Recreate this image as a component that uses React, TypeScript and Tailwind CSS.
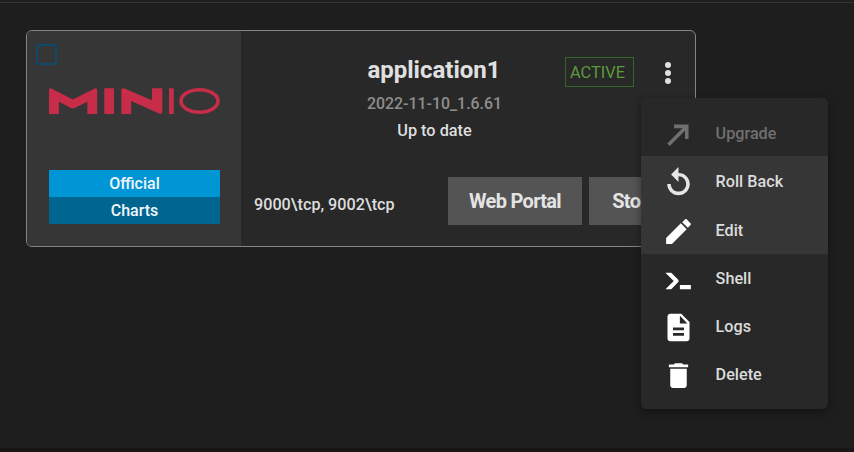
import React from "react";

const icons = {
  upgrade: "M8.8 4.8v2.6h6.1L3.8 18.5l1.8 1.8L16.7 9.2v6.1h2.6V4.8z",
  rollback:
    "M12 5V.8L6.6 6.2 12 11.6V7.4c3.1 0 5.6 2.5 5.6 5.6s-2.5 5.6-5.6 5.6-5.6-2.5-5.6-5.6H3.8c0 4.5 3.7 8.2 8.2 8.2s8.2-3.7 8.2-8.2S16.5 5 12 5z",
  edit: "M3 16.75V21h4.25L17.95 10.3l-4.25-4.25L3 16.75zM20.71 7.34c.39-.39.39-1.02 0-1.41l-2.64-2.64c-.39-.39-1.02-.39-1.41 0l-1.93 1.93 4.05 4.05 1.93-1.93z",
  shell: "M13 19V16H21V19H13M8.5 13L2.47 7H6.71L11.67 11.95C12.25 12.54 12.25 13.5 11.67 14.07L6.74 19H2.5L8.5 13Z",
  logs: "M14 2H6c-1.1 0-1.99.9-1.99 2L4 20c0 1.1.89 2 1.99 2H18c1.1 0 2-.9 2-2V8l-6-6zm2 16H8v-2h8v2zm0-4H8v-2h8v2zm-3-5V3.5L18.5 9H13z",
  trash: "M6 19c0 1.1.9 2 2 2h8c1.1 0 2-.9 2-2V7H6v12zM19 4h-3.5l-1-1h-5l-1 1H5v2h14V4z",
};

function Icon({ path, className }: { path: string; className: string }) {
  return (
    <svg viewBox="0 0 24 24" className={className} fill="currentColor">
      <path d={path} />
    </svg>
  );
}

const items = [
  { label: "Upgrade", path: icons.upgrade, row: "h-[48px] pt-[4px] text-[#707070]", icon: "text-[#707070]" },
  { label: "Roll Back", path: icons.rollback, row: "h-[49px] pt-[2px] bg-[#363636] text-[#dcdcdc]", icon: "text-[#e6e6e6]" },
  { label: "Edit", path: icons.edit, row: "h-[49px] pt-[2px] bg-[#363636] text-[#dcdcdc]", icon: "text-white" },
  { label: "Shell", path: icons.shell, row: "h-[48px] pt-[2px] text-[#dcdcdc]", icon: "text-white" },
  { label: "Logs", path: icons.logs, row: "h-[48px] pt-[2px] text-[#dcdcdc]", icon: "text-white" },
  { label: "Delete", path: icons.trash, row: "h-[48px] pt-[2px] text-[#dcdcdc]", icon: "text-white" },
];

function MinioLogo() {
  return (
    <svg viewBox="0 0 171 26" className="h-[26px] w-[171px]">
      <g fill="#c72c48">
        <path d="M0 26V2Q0-.4 2.4.4L23.8 11.4 45.6.4Q48-.4 48.2 2V26H38.3V13.7L25.6 19.9Q23.8 20.8 22 19.9L9.9 13.7V26Z" />
        <path d="M55.3.3H65V26H55.3Z" />
        <path d="M72.3 26V2Q72.5-.4 75.5.5L103 12.3V.3H113.3V24Q113 26.6 110 25.5L82.2 13V26Z" />
        <path d="M120 .3H124.8V26H120Z" />
      </g>
      <ellipse cx="150.5" cy="13" rx="18.5" ry="11.2" fill="none" stroke="#c72c48" strokeWidth="3.6" />
    </svg>
  );
}

export default function App() {
  return (
    <main className="relative h-[452px] w-[854px] overflow-hidden border-b-4 border-[#1b1518] bg-[#1e1e1e] pt-0.5 font-['Roboto',sans-serif] text-base text-[#e0e0e0]">
      <div className="h-px bg-[#343434]" />
      <article className="mt-[27px] ml-[26px] flex h-[217px] w-[670px] overflow-hidden rounded-[6px] border border-[#858585] bg-[#282828]">
        <aside className="h-full w-[214px] shrink-0 bg-[#363636] pl-[22px]">
          <div className="-ml-[13px] pt-[13px]">
            <div className="size-[21px] rounded-[2px] border-2 border-[#0e4a6b]" />
          </div>
          <div className="mt-[23px] h-[26px]">
            <MinioLogo />
          </div>
          <div className="mt-[56px] w-[171px] text-center font-medium leading-[27px] text-[#f0f6fa]">
            <div className="h-[27px] bg-[#0095d5]">Official</div>
            <div className="h-[27px] bg-[#006691]">Charts</div>
          </div>
        </aside>
        <section className="w-[454px] shrink-0">
          <div className="flex h-[146px]">
            <div className="ml-[86px] w-[214px] pt-[24px] text-center">
              <h1 className="text-2xl font-bold leading-[30px] text-[#e0e0e0]">application1</h1>
              <p className="mt-[5px] pl-px text-[15.9px] font-medium leading-[27px] text-[#8e8e8e]">2022-11-10_1.6.61</p>
              <p className="pl-px text-[16.3px] font-medium leading-[27px] text-[#dedede]">Up to date</p>
            </div>
            <div className="ml-6 mt-[26px] flex h-[30px] w-[69px] items-center justify-center border border-[#37642a] pr-[4px] pt-[2px] text-[16.4px] text-[#5d9a3e]">
              ACTIVE
            </div>
            <div className="ml-[31px] mt-[31px] flex h-[22px] flex-col justify-between">
              <i className="size-[6px] rounded-full bg-[#e0e0e0]" />
              <i className="size-[6px] rounded-full bg-[#e0e0e0]" />
              <i className="size-[6px] rounded-full bg-[#e0e0e0]" />
            </div>
          </div>
          <div className="flex h-12 items-center">
            <p className="ml-[13px] mt-[8px] w-[194px] whitespace-nowrap text-[16.2px] font-medium text-[#dedede]">9000\tcp, 9002\tcp</p>
            <button className="h-12 w-[134px] bg-[#545454] text-[20px] font-bold tracking-[-0.035em] text-[#e4e4e4]">Web Portal</button>
            <button className="ml-[7px] h-12 w-[84px] bg-[#545454] pl-px text-[20px] font-bold tracking-[-0.035em] text-[#e4e4e4]">Stop</button>
          </div>
        </section>
      </article>
      <nav className="absolute left-[641px] top-[98px] flex h-[311px] w-[187px] flex-col rounded-[5px] bg-[#282828] pt-[10px] shadow-[0_3px_8px_rgba(0,0,0,0.4)]">
        {items.map((item) => (
          <div key={item.label} className={`flex shrink-0 items-center pl-[21px] text-[16.2px] font-medium ${item.row}`}>
            <Icon path={item.path} className={`mt-px size-[33px] ${item.icon}`} />
            <span className="ml-[20.6px] leading-6">{item.label}</span>
          </div>
        ))}
      </nav>
    </main>
  );
}
